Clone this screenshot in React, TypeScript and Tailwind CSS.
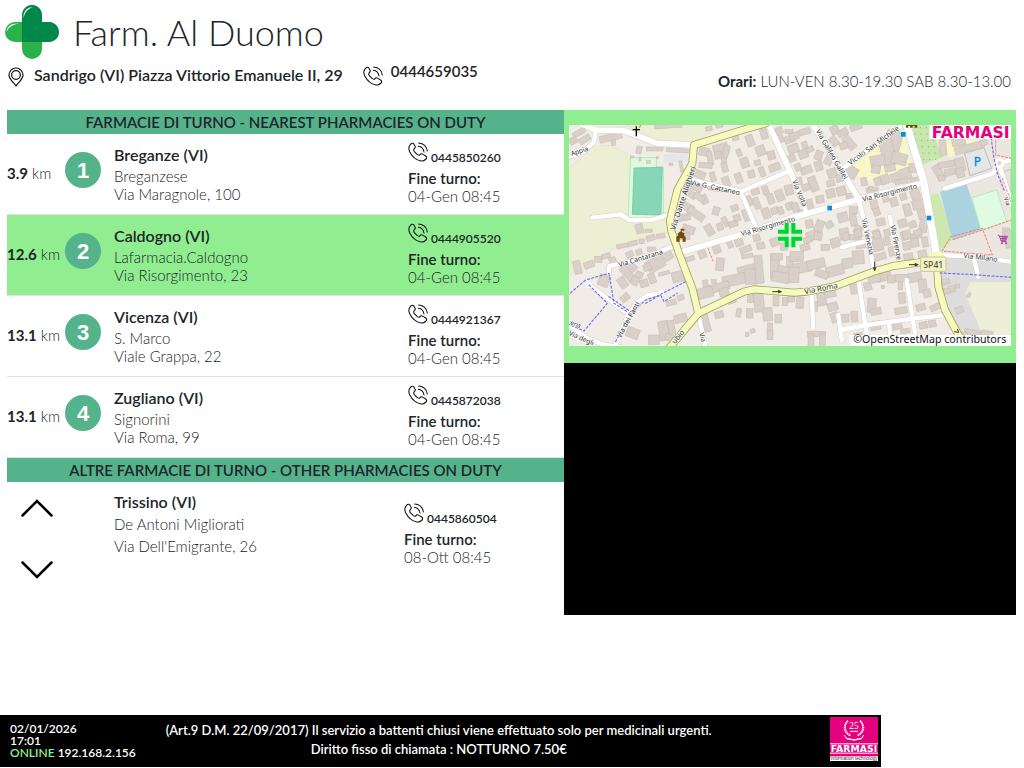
type Pharmacy = {
  km: string;
  city: string;
  name: string;
  address: string;
  phone: string;
  until: string;
};

const nearest: Pharmacy[] = [
  { km: "3.9", city: "Breganze (VI)", name: "Breganzese", address: "Via Maragnole, 100", phone: "0445850260", until: "04-Gen 08:45" },
  { km: "12.6", city: "Caldogno (VI)", name: "Lafarmacia.Caldogno", address: "Via Risorgimento, 23", phone: "0444905520", until: "04-Gen 08:45" },
  { km: "13.1", city: "Vicenza (VI)", name: "S. Marco", address: "Viale Grappa, 22", phone: "0444921367", until: "04-Gen 08:45" },
  { km: "13.1", city: "Zugliano (VI)", name: "Signorini", address: "Via Roma, 99", phone: "0445872038", until: "04-Gen 08:45" },
];

const SELECTED = 1;

function PhoneIcon() {
  return (
    <svg viewBox="0 0 60 60" className="size-5 shrink-0" fill="none" stroke="#111" strokeWidth="3.2" strokeLinecap="round" strokeLinejoin="round" aria-hidden="true">
      <path d="M7 8C2 13 1 20 5 29C12 43 25 54 39 57C46 58 50 55 54 51C57 48 56 44 53 42L45 37C41 34 38 35 36 38C34 41 31 40 28 38L19 29C17 26 16 23 19 20C22 17 23 15 21 12L17 5C14 2 10 4 7 8Z" />
      <path d="M32 3C46 4 56 13 58 27M31 13C41 14 46 20 48 30" />
    </svg>
  );
}

function PinIcon() {
  return (
    <svg viewBox="0 0 48 60" className="mt-2 ml-[3px] h-5 w-4 shrink-0" fill="none" stroke="#111" strokeWidth="3.6" strokeLinejoin="round" aria-hidden="true">
      <path d="M24 57C20 49 3 38 3 24A21 21 0 0 1 45 24C45 38 28 49 24 57Z" />
      <circle cx="24" cy="24" r="13" />
    </svg>
  );
}

function CrossLogo() {
  return (
    <svg viewBox="0 0 54 54" className="size-[54px] shrink-0" role="img" aria-label="Farmacia">
      <rect x="17" y="0" width="20" height="54" rx="10" fill="#29b34a" />
      <rect x="0" y="17" width="54" height="20" rx="10" fill="#29b34a" />
      <path d="M17 37V10A10 10 0 0 1 37 10V17H44A10 10 0 0 1 44 37Z" fill="#00874a" />
      <path d="M18.500 13C18 6 22 2 28 2C23 4 20 7 18.500 13Z" fill="#fff" opacity="0.85" />
      <path d="M1.500 27C2 21 6 18 14 18.500C7 20 4 22 1.500 27Z" fill="#fff" opacity="0.85" />
    </svg>
  );
}

function SectionTitle({ children }: { children: string }) {
  return <h2 className="h-6 bg-[#55b38c] text-center text-[15px] leading-6 font-semibold">{children}</h2>;
}

function Contact({ phone, until }: { phone: string; until: string }) {
  return (
    <div>
      <a href={`tel:${phone}`} className="flex gap-[3px] text-xs leading-4 font-semibold">
        <PhoneIcon />
        <span className="pt-2">{phone}</span>
      </a>
      <p className="mt-[3px] text-[15px] leading-[18px] font-semibold">Fine turno:</p>
      <p className="text-[15px] leading-[18px] font-light">{until}</p>
    </div>
  );
}

function PharmacyRow({ item, index }: { item: Pharmacy; index: number }) {
  const tone = index === SELECTED ? "bg-[#90ee90]" : "bg-white";
  return (
    <li className={`grid h-[81px] grid-cols-[58px_49px_294px_1fr] border-b border-[#dee2e6] ${tone}`}>
      <p className="pt-[30px] text-[15px] leading-[18px] font-light whitespace-nowrap">
        <b className="font-bold">{item.km}</b> km
      </p>
      <div className="pt-[18px]">
        <span className="flex size-9 items-center justify-center rounded-full bg-[#55b38c] font-['Liberation_Sans',sans-serif] text-[22px] font-bold text-white">{index + 1}</span>
      </div>
      <div className="pt-3 text-[15px] leading-[18px] font-light">
        <h3 className="mb-[3px] text-base leading-[18px] font-semibold">{item.city}</h3>
        <p>{item.name}</p>
        <p>{item.address}</p>
      </div>
      <div className="pt-2">
        <Contact phone={item.phone} until={item.until} />
      </div>
    </li>
  );
}

/* Map drawing. Building footprints: centre x, centre y, width, height, rotation. */
type Footprint = [number, number, number, number, number];

const northWest: Footprint[] = [
  [45, 68, 40, 16, -30], [62, 88, 36, 18, -32], [28, 92, 24, 20, -30], [140, 82, 68, 20, -14], [148, 98, 12, 16, 0],
  [225, 120, 16, 22, 10], [205, 141, 10, 6, 0], [228, 147, 6, 12, 0], [254, 156, 12, 8, 0], [281, 143, 6, 6, 0], [300, 50, 56, 10, -4], [343, 46, 22, 12, 0],
  [272, 117, 50, 12, 0], [340, 121, 66, 12, 3], [352, 170, 34, 9, 80], [321, 163, 12, 8, 0], [434, 56, 20, 12, -15], [466, 47, 20, 12, -15],
  [420, 125, 30, 24, 10], [438, 144, 16, 42, -10], [425, 166, 40, 16, 5], [470, 118, 44, 32, -15], [486, 124, 18, 36, 15], [462, 136, 20, 22, -10],
  [514, 82, 20, 18, -15], [558, 92, 22, 34, -20], [600, 72, 20, 30, -15], [525, 128, 14, 22, -20], [542, 158, 24, 30, -20], [590, 122, 28, 30, -20], [622, 136, 22, 26, -15],
  [580, 158, 18, 16, -15], [632, 172, 34, 22, -20], [594, 185, 16, 30, -20], [562, 192, 20, 22, -15], [524, 204, 20, 30, -20], [486, 215, 22, 30, -20], [482, 172, 18, 28, -15], [480, 150, 16, 14, 0],
  [406, 193, 36, 22, 20], [446, 200, 16, 28, -15], [454, 235, 42, 16, 10], [395, 228, 42, 26, 25], [378, 250, 42, 20, 35], [420, 268, 20, 28, -25], [406, 262, 34, 18, 35],
  [372, 292, 36, 22, 30], [396, 312, 56, 22, 35], [360, 322, 38, 20, -10], [456, 303, 20, 24, 15], [512, 294, 22, 18, -20], [484, 335, 16, 30, -30], [468, 350, 18, 22, -20],
  [436, 360, 22, 34, -30], [507, 342, 28, 18, -20], [519, 324, 20, 20, -20], [546, 316, 18, 36, -20], [552, 274, 24, 30, -20], [578, 280, 18, 36, -20], [574, 245, 24, 18, -15], [604, 241, 18, 26, -20],
  [606, 310, 22, 32, -20], [632, 302, 24, 20, -20], [620, 267, 20, 30, -20], [647, 256, 24, 34, -20], [675, 240, 24, 30, -15], [650, 302, 16, 22, -20], [678, 288, 24, 22, -20],
  [226, 356, 22, 28, -15], [374, 358, 38, 22, 20], [364, 379, 28, 20, 0], [645, 62, 22, 20, -20], [676, 88, 30, 22, -20], [650, 86, 16, 22, -20], [680, 146, 28, 20, -20], [675, 64, 24, 12, 0],
];

const northEast: Footprint[] = [
  [12, 78, 28, 22, -15], [44, 65, 34, 18, -15], [10, 116, 32, 26, -20], [40, 132, 28, 26, -20], [60, 118, 22, 16, -25], [44, 105, 16, 20, -15], [134, 60, 24, 26, -25], [158, 68, 32, 20, -30], [198, 51, 36, 18, -20], [132, 94, 22, 30, -40], [178, 98, 24, 46, -40], [161, 107, 24, 20, -20],
  [86, 136, 22, 28, 20], [116, 150, 22, 30, 25], [86, 168, 22, 28, -15], [49, 180, 34, 22, -20], [24, 172, 18, 22, -20], [22, 214, 28, 22, -10], [70, 222, 24, 46, -20], [48, 232, 24, 20, -20], [126, 190, 28, 28, -20], [148, 205, 20, 22, -15], [184, 186, 36, 34, 30], [122, 220, 24, 18, -15], [122, 250, 26, 26, -15], [154, 243, 28, 26, -15], [180, 258, 24, 16, 0], [90, 268, 24, 22, -10], [60, 285, 18, 34, -15], [16, 292, 20, 26, -20], [34, 308, 20, 18, -15],
  [242, 245, 22, 28, -20], [222, 215, 18, 24, -10], [263, 214, 20, 24, -20], [285, 208, 26, 28, -20], [315, 202, 26, 24, -20], [346, 192, 32, 34, -20], [370, 174, 26, 26, 0], [334, 214, 40, 14, -10], [374, 212, 28, 18, -15], [250, 236, 30, 10, 10],
  [252, 282, 22, 30, -15], [286, 264, 18, 24, -15], [312, 276, 22, 26, -15], [340, 260, 20, 20, -20], [376, 252, 28, 30, -20], [385, 283, 36, 28, -15], [395, 312, 22, 28, -15], [352, 300, 22, 36, -15], [260, 306, 20, 22, -20], [272, 336, 26, 22, -10], [338, 340, 26, 24, -15], [368, 344, 22, 20, -20], [400, 348, 24, 38, 10], [377, 378, 34, 18, -20], [343, 378, 20, 26, -15], [260, 372, 22, 26, -20], [190, 300, 24, 22, 0], [158, 322, 30, 28, -15], [190, 330, 20, 36, -10], [118, 344, 22, 20, -30], [88, 348, 24, 34, 20], [58, 342, 22, 24, -10], [204, 358, 24, 24, 20], [163, 372, 28, 34, -10], [64, 378, 28, 28, -20], [196, 382, 36, 16, 0],
  [310, 92, 48, 58, 15], [292, 122, 40, 90, -15], [263, 152, 44, 32, -10], [328, 146, 46, 34, 15], [258, 178, 26, 24, 10], [300, 174, 32, 20, -10], [459, 113, 20, 46, -5], [538, 113, 90, 22, -15], [506, 96, 40, 22, -10], [582, 98, 20, 18, -20], [446, 188, 22, 48, -30], [470, 163, 50, 18, -10], [510, 164, 28, 40, -15], [510, 188, 24, 28, -15], [480, 186, 32, 20, -15], [455, 204, 20, 16, 0], [648, 373, 20, 38, 0],
];

const southWest: Footprint[] = [
  [40, 112, 22, 40, -15], [75, 104, 30, 20, -20], [103, 88, 22, 18, 0], [126, 78, 26, 14, -15], [175, 48, 34, 12, -10], [206, 40, 28, 14, -15], [233, 34, 16, 14, 0], [260, 24, 26, 16, -15], [290, 18, 26, 14, -10], [254, 2, 22, 10, 0], [197, 73, 22, 18, -25], [146, 92, 20, 20, -20], [225, 66, 18, 16, -20], [262, 58, 24, 14, 0], [120, 152, 32, 34, 20], [201, 110, 34, 26, 45], [190, 130, 50, 24, 50], [176, 158, 34, 24, 55], [213, 152, 22, 26, 25], [240, 160, 24, 22, -15], [226, 134, 22, 18, 20], [264, 145, 20, 30, -20], [274, 102, 54, 38, -30], [310, 76, 30, 30, -30], [250, 112, 24, 20, -20], [183, 203, 28, 20, -40], [342, 140, 36, 32, -15], [300, 130, 10, 34, 75], [322, 218, 30, 16, -15], [350, 203, 20, 16, -20], [300, 302, 30, 58, -10], [322, 292, 20, 42, -10], [350, 265, 38, 24, -15], [270, 329, 32, 28, 0], [206, 309, 38, 30, 20], [316, 323, 26, 20, 20],
  [415, 73, 22, 24, -20], [378, 86, 26, 14, -15], [458, 57, 22, 26, -20], [497, 41, 16, 26, -25], [525, 37, 24, 22, -20], [410, 50, 10, 24, 70], [468, 103, 24, 38, 5], [545, 58, 36, 18, -20], [550, 78, 34, 12, -10], [590, 47, 24, 20, -10], [578, 24, 20, 20, -15], [632, 36, 26, 24, -20], [660, 50, 20, 22, 0], [547, 120, 52, 26, -15], [510, 150, 68, 32, -12], [562, 140, 38, 46, -5], [585, 118, 24, 84, -5], [464, 172, 64, 24, -15], [424, 188, 46, 32, -15], [424, 160, 16, 20, -10], [450, 155, 14, 12, 0], [480, 186, 28, 24, -15], [633, 110, 28, 74, 0], [660, 118, 36, 18, 15], [638, 80, 34, 20, 0], [650, 142, 52, 30, 10], [678, 95, 20, 30, 0],
  [465, 254, 26, 20, -15], [503, 212, 26, 16, -20], [524, 248, 14, 26, 10], [425, 275, 20, 62, -15], [557, 250, 20, 28, 0], [560, 204, 18, 28, 0], [585, 218, 30, 56, -5], [611, 253, 28, 40, -5], [636, 213, 18, 30, 0], [663, 215, 16, 24, 0], [682, 206, 20, 20, 0], [643, 266, 20, 26, 0], [618, 292, 16, 26, 0], [618, 315, 18, 28, 0], [566, 303, 14, 12, -20], [550, 313, 10, 12, 0],
];

const southEast: Footprint[] = [
  [52, 30, 24, 18, -20], [84, 18, 24, 24, 10], [136, 38, 28, 28, -15], [45, 52, 28, 20, -15], [106, 52, 26, 18, 0], [168, 20, 20, 22, -20], [204, 10, 22, 24, -15], [20, 80, 40, 30, 0], [35, 113, 55, 30, -10], [78, 102, 54, 28, -12], [135, 122, 52, 30, -15], [172, 100, 30, 30, -10], [12, 135, 30, 46, 0], [95, 132, 40, 22, 20], [205, 82, 34, 40, -5], [212, 45, 28, 20, -10], [262, 40, 30, 46, -15], [290, 34, 20, 24, -10], [270, 80, 36, 20, -15], [306, 64, 20, 28, -10], [350, 48, 22, 24, -10], [374, 38, 24, 26, -10], [405, 36, 18, 30, -10], [355, 80, 28, 20, -10], [397, 72, 26, 22, -10], [260, 15, 20, 22, -15], [292, 8, 20, 20, -15], [350, 14, 24, 24, -15], [384, 8, 24, 18, -15],
  [30, 218, 22, 34, 5], [94, 202, 26, 50, -10], [120, 188, 34, 28, -10], [74, 230, 16, 30, 0], [128, 230, 30, 24, -15], [192, 177, 22, 30, -10], [135, 262, 24, 30, -20], [163, 265, 28, 24, -5], [193, 260, 20, 32, -5], [233, 169, 22, 24, -15], [282, 140, 44, 25, -15], [253, 145, 36, 26, -15], [338, 144, 46, 22, 0], [375, 142, 40, 28, -10], [304, 147, 22, 24, 0], [279, 171, 10, 10, 0], [331, 168, 14, 22, 0], [398, 167, 24, 40, -5], [411, 190, 22, 24, -15], [336, 204, 20, 32, -5], [392, 232, 28, 20, -15], [245, 226, 26, 42, 5], [333, 242, 38, 20, -10], [258, 244, 32, 20, -10], [437, 231, 34, 18, -25], [256, 287, 30, 26, -10], [321, 286, 28, 24, -15], [205, 320, 26, 22, -10], [400, 286, 24, 20, -10], [427, 281, 22, 20, -10], [346, 303, 28, 14, -10],
  [467, 155, 22, 16, -15], [485, 177, 20, 20, -10], [508, 240, 24, 20, -20], [470, 184, 20, 16, 0], [503, 168, 12, 12, 0], [537, 195, 8, 14, 20], [80, 312, 54, 16, 0], [63, 334, 18, 44, 0], [97, 334, 18, 44, 0], [547, 310, 48, 22, 10], [590, 315, 34, 26, 10], [656, 28, 20, 52, -5], [520, 315, 24, 18, 10],
];

function Buildings({ items, at }: { items: Footprint[]; at: string }) {
  return (
    <g transform={at} fill="#d9d0c9" stroke="#c5b8ae" strokeWidth="1.500">
      {items.map(([x, y, w, h, r], i) => (
        <rect key={i} x={x - w / 2} y={y - h / 2} width={w} height={h} transform={`rotate(${r} ${x} ${y})`} />
      ))}
    </g>
  );
}

const minorRoads = [
  "M35 -5L80 15L165 17L265 55L375 60",
  "M340 380L540 322L663 280L863 225L1048 177",
  "M600 0L675 165",
  "M733 0L823 145L868 220",
];

const lanes = [
  "M80 15L75 50L45 80L-5 98",
  "M70 278L155 268L180 285L250 285L295 270",
  "M370 165L515 200L655 140M515 200L560 305",
  "M663 135L713 265",
  "M868 220L898 335L913 430",
  "M823 130L993 5",
  "M963 275L975 340L993 418",
  "M310 365L205 405L120 423L120 445",
  "M60 480L175 565M275 505L240 510L205 530L175 575L135 670",
  "M-5 598L50 637L105 660L150 665",
  "M388 565L410 670",
  "M728 510L733 610",
  "M868 465L893 625M1013 465L1038 625M813 615L893 600L1038 580L1128 570M808 570L818 645M960 590L964 640",
  "M818 367L903 345",
  "M1113 390L1213 395L1326 410M1213 395L1228 455",
  "M1128 190L1273 145L1288 115L1335 103M1288 115L1306 165L1335 260",
];

const dottedPaths = [
  "M-5 512L50 465L120 445M120 445L135 535L175 560M60 480L115 535L45 618L0 598",
  "M120 515L185 560M230 535L290 500L350 470",
  "M140 650L170 590M180 570L230 525L275 510L285 530L325 505",
  "M1268 0V50L1275 100L1285 145L1305 195",
  "M1113 444L1200 448L1326 457",
];

const arterial = "M590 -5L520 15L375 60L370 115L325 195L303 285L307 318L330 385L370 490L388 565";
const viaRoma = "M300 670L388 565L525 500L555 493L675 503L713 500L793 485L913 440L973 423L1103 405L1108 485L1128 555L1163 620L1190 668";

const streetNames: [string, number, number, number, number][] = [
  ["Appia", 8, 93, -18, 20],
  ["Via Dante Alighieri", 319, 316, -72, 23],
  ["Via G. Cattaneo", 363, 179, 12, 21],
  ["Via Galileo Galilei", 740, 18, 60, 21],
  ["Vicolo San Michele", 844, 121, -36, 21],
  ["Via Volta", 669, 168, 68, 21],
  ["Via Risorgimento", 882, 230, -14, 21],
  ["Via Risorgimento", 518, 334, -16, 21],
  ["Via Venezia", 878, 282, 78, 21],
  ["Via Firenze", 964, 302, 79, 21],
  ["Via Cantarana", 151, 427, -17, 21],
  ["Via dei Fanti", 155, 640, -61, 21],
  ["eria", 3, 597, 22, 18],
  ["Via degli", -2, 629, 24, 20],
  ["ubio", 318, 658, -50, 22],
  ["Via", 391, 625, 76, 20],
  ["Via Roma", 708, 508, -11, 23],
  ["Via Milano", 1183, 398, 7, 21],
  ["Via", 1304, 219, 70, 18],
];

function StreetMap() {
  return (
    <svg viewBox="0 0 1326 663" className="block w-full bg-[#f1ede6]" role="img" aria-label="Mappa della zona" fontFamily="'Noto Sans', sans-serif">
      <path d="M850 0H1326V663H1180L1103 420L1060 165L1013 0Z" fill="#ebe6df" />
      <g stroke="#dcdcc6" strokeWidth="1.500">
        <path d="M0 130L45 90L75 65L120 60L190 95V285H295L303 315L270 335L145 365L0 450Z" fill="#edefd5" />
        <path d="M170 0H450L375 55L265 45Z" fill="#edefd5" />
        <path d="M1203 470H1326V663H1230L1233 615L1188 505Z" fill="#edefd8" />
      </g>
      <path d="M185 98H262V126H283V278H177Z" fill="#defadb" stroke="#91e4ac" strokeWidth="2" />
      <path d="M195 129L280 127L276 270L190 268Z" fill="#87d6b8" stroke="#68bf9c" strokeWidth="2" />
      <rect x="284" y="87" width="72" height="25" fill="#e5e6e9" />
      <path d="M853 120L983 10L1013 45L1028 135L878 173Z" fill="#f9f7c8" />
      <path d="M1110 45H1250V70L1140 95Z" fill="#f9f7c8" />
      <path d="M1028 0H1078L1123 95L1058 120Z" fill="#c8e7ac" />
      <g fill="#85b66f">
        {[0, 1, 2, 3, 4, 5].flatMap((row) =>
          [0, 1, 2, 3].map((col) => <circle key={`${row}-${col}`} cx={1036 + col * 18 + row * 2} cy={8 + row * 19} r="2" />),
        )}
      </g>
      <path d="M1083 210L1108 205L1153 340L1118 380L1103 375Z" fill="#cce8ae" />
      <path d="M1113 200L1193 177L1236 315L1150 345Z" fill="#aad3df" />
      <path d="M1208 218L1283 195L1313 290L1236 315Z" fill="#dffbe2" stroke="#9ee6b2" strokeWidth="2" />
      <path d="M1113 392L1326 412V470H1203L1188 505L1233 615H1163L1113 485Z" fill="#dedddd" />
      <path d="M1187 85L1245 68L1268 130L1203 152Z" fill="#e6e6e7" stroke="#b9bcc3" strokeWidth="3" />
      <path d="M1303 140L1326 132V205L1310 190Z" fill="#e4e4e6" stroke="#c5c5c9" strokeWidth="3" />

      <g fill="none" strokeLinejoin="round" strokeLinecap="round" stroke="#d7d0c9">
        {lanes.map((d) => <path key={d} d={d} strokeWidth="16" />)}
        {minorRoads.map((d) => <path key={d} d={d} strokeWidth="20" />)}
        <path d="M1013 0L1063 165L1093 335L1103 395" strokeWidth="25" />
      </g>

      <Buildings items={northWest} at="translate(-15 -45)" />
      <Buildings items={northEast} at="translate(663 -45)" />
      <Buildings items={southWest} at="translate(-15 315)" />
      <Buildings items={southEast} at="translate(663 315)" />

      <g fill="none" strokeLinejoin="round" strokeLinecap="round">
        <g stroke="#fff">
          {lanes.map((d) => <path key={d} d={d} strokeWidth="13" />)}
          {minorRoads.map((d) => <path key={d} d={d} strokeWidth="17" />)}
          <path d="M1013 0L1063 165L1093 335L1103 395" strokeWidth="22" />
        </g>
        <circle cx="60" cy="480" r="9" fill="#fff" />
        <circle cx="277" cy="505" r="9" fill="#fff" />
        <circle cx="1291" cy="114" r="11" fill="#ddd8d2" stroke="#fff" strokeWidth="9" />
        <g stroke="#a3a25c" strokeWidth="24">
          <path d={arterial} />
          <path d={viaRoma} />
        </g>
        <circle cx="1103" cy="404" r="26" fill="#f7fabf" stroke="none" />
        <g stroke="#f7fabf" strokeWidth="19">
          <path d={arterial} />
          <path d={viaRoma} />
        </g>
        <g stroke="#6d6dff" strokeWidth="3.500" strokeDasharray="6 7">
          {dottedPaths.map((d) => <path key={d} d={d} />)}
        </g>
        <path d="M1153 344L1250 312L1326 285M1120 378L1145 335L1240 310L1270 390L1120 378M1280 0V90L1326 100M417 370L432 408M1300 160L1326 230" stroke="#ff7a6e" strokeWidth="3" strokeDasharray="6 6" />
      </g>

      <g fill="#333" stroke="#fff" strokeWidth="4" strokeOpacity="0.7" paintOrder="stroke">
        {streetNames.map(([label, x, y, angle, size]) => (
          <text key={`${label}-${x}`} transform={`translate(${x} ${y}) rotate(${angle})`} fontSize={size}>{label}</text>
        ))}
      </g>

      <path d="M202 4V34M191 14H213" stroke="#000" strokeWidth="4" fill="none" />
      <path d="M216 0L211 8" stroke="#d79b45" strokeWidth="4" />
      <g fill="#0092da">
        <rect x="996" y="21" width="14" height="14" />
        <rect x="775" y="242" width="14" height="14" />
        <rect x="1073" y="272" width="14" height="14" />
      </g>
      <text x="1214" y="124" fontSize="36" fill="#0092da" stroke="#0092da">P</text>
      <path d="M1011 0H1045V8H1037V3H1031V8H1023V3H1018V8H1011Z" fill="#734a08" />
      <path d="M322 350V336L328 330L325 326L335 319V311H346V317H338V320L348 326L344 330L350 336V350H341V340H332V350Z" fill="#734a08" />
      <path d="M1286 330L1291 332L1297 350H1313M1290 334H1315L1310 346H1296M1294 340H1312M1302 333V346M1308 333V346" fill="none" stroke="#ac39ac" strokeWidth="3" />
      <circle cx="1299" cy="355" r="3" fill="#ac39ac" />
      <circle cx="1311" cy="355" r="3" fill="#ac39ac" />
      <g stroke="#333" strokeWidth="2" fill="#333">
        <path d="M610 500H632M1020 419H1042M917 410V432" strokeWidth="3" />
        <path d="M628 496L638 500L628 504ZM1038 415L1048 419L1038 423ZM913 428L917 438L921 428Z" />
      </g>
      <path d="M1155 620L1169 622L1165 612" fill="none" stroke="#333" strokeWidth="3" />

      <rect x="1055" y="396" width="76" height="43" rx="4" fill="#f3f4cb" stroke="#c5c693" strokeWidth="3" />
      <text x="1093" y="428" textAnchor="middle" fontSize="26" fontWeight="500" fill="#555527">SP41</text>

      <g fill="none" strokeLinejoin="miter">
        <path d="M627 320H653V294M673 294V320H699M699 341H673V367M653 367V341H627" stroke="#c8ffd4" strokeWidth="17" />
        <path d="M627 320H653V294M673 294V320H699M699 341H673V367M653 367V341H627" stroke="#00d42e" strokeWidth="12" />
      </g>

      <rect x="1081" y="0" width="245" height="42" fill="#fff" fillOpacity="0.9" />
      <text x="1322" y="38" textAnchor="end" fontSize="47" fontWeight="700" fontFamily="'DejaVu Sans', sans-serif" fill="#e6007e">FARMASI</text>
      <rect x="842" y="630" width="484" height="33" fill="#fff" />
      <text x="1312" y="655" textAnchor="end" fontSize="32" fill="#111">©OpenStreetMap contributors</text>
    </svg>
  );
}

function FarmasiBadge() {
  return (
    <svg viewBox="0 0 144 132" className="h-11 w-12 shrink-0" role="img" aria-label="Farmasi information technology">
      <rect width="144" height="132" fill="#e5007d" />
      <g fill="none" stroke="#fff">
        <path d="M54 11C38 26 41 48 62 56M90 11C106 26 103 48 82 56" strokeWidth="5" strokeDasharray="5 2" />
        <path d="M51 15C42 28 46 45 62 54M93 15C102 28 98 45 82 54" strokeWidth="2" />
        <path d="M43 54L49 64Q72 72 95 64L101 54M49 65Q72 74 95 65M60 43H84" strokeWidth="3" />
      </g>
      <g fill="#fff" textAnchor="middle">
        <text x="72" y="37" fontSize="28" fontFamily="'Liberation Serif', serif">25</text>
        <rect y="79" width="144" height="3" />
        <text x="72" y="104" fontSize="28" fontWeight="700" fontFamily="'DejaVu Sans', sans-serif">FARMASI</text>
        <rect y="107" width="144" height="3" />
        <rect y="118" width="144" height="14" />
      </g>
      <text x="72" y="129" fontSize="14" textAnchor="middle" fill="#333" fontFamily="'Liberation Sans', sans-serif">information technology</text>
    </svg>
  );
}

export default function App() {
  return (
    <div className="flex min-h-screen flex-col bg-white pb-px font-['Lato',sans-serif] text-[#212529]">
      <header className="h-[110px] px-[5px] pt-[5px]">
        <div className="flex items-center gap-3.5">
          <CrossLogo />
          <h1 className="text-4xl leading-[52px] font-light">Farm. Al Duomo</h1>
        </div>
        <div className="flex items-start pr-2">
          <PinIcon />
          <p className="ml-2.5 pt-[7px] text-base leading-[18px] font-semibold">Sandrigo (VI) Piazza Vittorio Emanuele II, 29</p>
          <a href="tel:0444659035" className="ml-5 flex gap-2 pt-[3px] text-[15px] leading-[18px] font-semibold">
            <span className="pt-1"><PhoneIcon /></span>
            0444659035
          </a>
          <p className="ml-auto pt-[13px] text-[15px] leading-[18px] font-light">
            <b className="font-bold">Orari:</b> LUN-VEN 8.30-19.30 SAB 8.30-13.00
          </p>
        </div>
      </header>

      <main className="grid grid-cols-[557fr_452fr] pr-2 pl-[7px]">
        <div>
          <section>
            <SectionTitle>FARMACIE DI TURNO - NEAREST PHARMACIES ON DUTY</SectionTitle>
            <ol>
              {nearest.map((item, i) => <PharmacyRow key={item.phone} item={item} index={i} />)}
            </ol>
          </section>
          <section>
            <SectionTitle>ALTRE FARMACIE DI TURNO - OTHER PHARMACIES ON DUTY</SectionTitle>
            <div className="grid grid-cols-[107px_290px_1fr]">
              <div className="flex flex-col items-start gap-11 pt-[17px] pl-3.5">
                <button type="button" aria-label="Precedente">
                  <svg viewBox="0 0 32 18" className="h-[18px] w-8" fill="none" stroke="#000" strokeWidth="2.500" strokeLinecap="round"><path d="M1.500 16.500L16 2L30.500 16.500" /></svg>
                </button>
                <button type="button" aria-label="Successiva">
                  <svg viewBox="0 0 32 18" className="h-[18px] w-8" fill="none" stroke="#000" strokeWidth="2.500" strokeLinecap="round"><path d="M1.500 1.500L16 16L30.500 1.500" /></svg>
                </button>
              </div>
              <div className="pt-[9px] text-[15px] leading-[22px] font-light">
                <h3 className="text-base leading-[22px] font-semibold">Trissino (VI)</h3>
                <p>De Antoni Migliorati</p>
                <p>Via Dell'Emigrante, 26</p>
              </div>
              <div className="pt-[21px]">
                <Contact phone="0445860504" until="08-Ott 08:45" />
              </div>
            </div>
          </section>
        </div>
        <div>
          <div className="bg-[#90ee90] px-[5px] pt-[15px] pb-[17px]">
            <StreetMap />
          </div>
          <div className="h-[252px] bg-black" />
        </div>
      </main>

      <footer className="mt-auto flex h-[52px] w-[86%] bg-black pr-[3px] text-white">
        <div className="pt-2 pl-2.5 text-xs leading-3 font-semibold whitespace-nowrap">
          <p>02/01/2026</p>
          <p>17:01</p>
          <p><span className="text-[#90ee90]">ONLINE</span> 192.168.2.156</p>
        </div>
        <p className="flex-1 pt-1.5 pr-[88px] text-center text-[13px] leading-[19px] font-semibold">
          (Art.9 D.M. 22/09/2017) Il servizio a battenti chiusi viene effettuato solo per medicinali urgenti.
          <br />
          Diritto fisso di chiamata : NOTTURNO 7.50€
        </p>
        <div className="pt-0.5"><FarmasiBadge /></div>
      </footer>
    </div>
  );
}
